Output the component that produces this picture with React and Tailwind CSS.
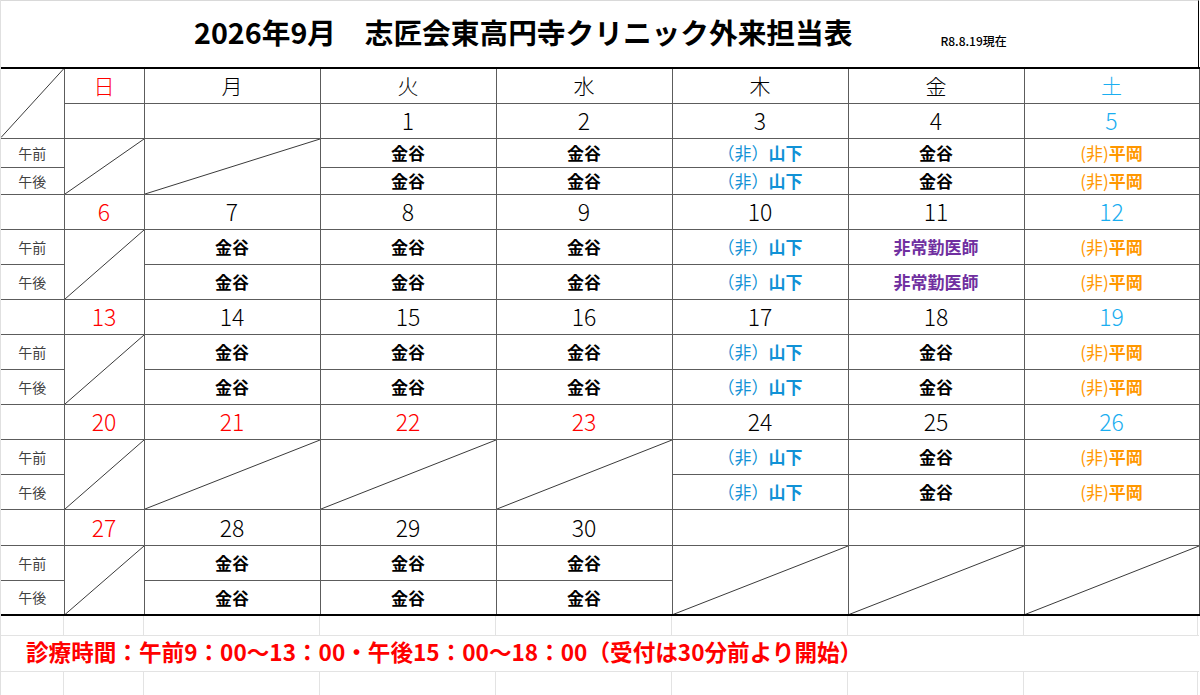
import React from "react";

const B = "border-r border-b border-[#5c5c5c]";
const H = { 27: "h-[27px]", 29: "h-[29px]", 35: "h-[35px]", 36: "h-[36px]" };

function Td({ children, className = "", rowSpan }) {
  return (
    <td rowSpan={rowSpan} className={`${B} p-0 text-center align-middle ${className}`}>
      {children}
    </td>
  );
}

function Diag({ rowSpan = 2 }) {
  return (
    <td rowSpan={rowSpan} className={`${B} relative p-0`}>
      <svg
        className="absolute inset-0 h-full w-full"
        viewBox="0 0 100 100"
        preserveAspectRatio="none"
      >
        <line x1="0" y1="100" x2="100" y2="0" stroke="#3a3a3a" strokeWidth="1" vectorEffect="non-scaling-stroke" />
      </svg>
    </td>
  );
}

function Name({ t }) {
  if (t === "K") return <span className="font-bold text-black">金谷</span>;
  if (t === "Y")
    return (
      <span className="text-[#1192d6]">
        <span>（非）</span>
        <span className="font-bold">山下</span>
      </span>
    );
  if (t === "H")
    return (
      <span className="text-[#ff9700]">
        <span>(非)</span>
        <span className="font-bold">平岡</span>
      </span>
    );
  if (t === "P") return <span className="font-bold text-[#7030a0]">非常勤医師</span>;
  return null;
}

const weeks = [
  { dates: ["", "", "1", "2", "3", "4", "5"], dh: 35, ah: 29, ph: 27, am: ["D", "D", "K", "K", "Y", "K", "H"], pm: ["K", "K", "Y", "K", "H"] },
  { dates: ["6", "7", "8", "9", "10", "11", "12"], dh: 35, ah: 35, ph: 35, am: ["D", "K", "K", "K", "Y", "P", "H"], pm: ["K", "K", "K", "Y", "P", "H"] },
  { dates: ["13", "14", "15", "16", "17", "18", "19"], dh: 35, ah: 35, ph: 35, am: ["D", "K", "K", "K", "Y", "K", "H"], pm: ["K", "K", "K", "Y", "K", "H"] },
  { dates: ["20", "21", "22", "23", "24", "25", "26"], dh: 35, ah: 35, ph: 35, am: ["D", "D", "D", "D", "Y", "K", "H"], pm: ["Y", "K", "H"] },
  { dates: ["27", "28", "29", "30", "", "", ""], dh: 36, ah: 35, ph: 35, am: ["D", "K", "K", "K", "D", "D", "D"], pm: ["K", "K", "K"] },
];

const holidays = ["21", "22", "23"];

function dateColor(i, d) {
  if (i === 0 || holidays.includes(d)) return "text-[#ff0000]";
  if (i === 6) return "text-[#1aaef0]";
  return "text-black";
}

function Week({ w }) {
  return (
    <>
      <tr className={H[w.dh]}>
        <Td />
        {w.dates.map((d, i) => (
          <Td key={i} className={`text-[23px] leading-none font-light ${dateColor(i, d)}`}>
            {d}
          </Td>
        ))}
      </tr>
      <tr className={H[w.ah]}>
        <Td className="text-[14px] leading-none text-[#404040]">午前</Td>
        {w.am.map((t, i) =>
          t === "D" ? (
            <Diag key={i} />
          ) : (
            <Td key={i} className="text-[17px] leading-none">
              <Name t={t} />
            </Td>
          )
        )}
      </tr>
      <tr className={H[w.ph]}>
        <Td className="text-[14px] leading-none text-[#404040]">午後</Td>
        {w.pm.map((t, i) => (
          <Td key={i} className="text-[17px] leading-none">
            <Name t={t} />
          </Td>
        ))}
      </tr>
    </>
  );
}

const days = [
  { t: "日", c: "text-[#ff0000]" },
  { t: "月", c: "text-black" },
  { t: "火", c: "text-black" },
  { t: "水", c: "text-black" },
  { t: "木", c: "text-black" },
  { t: "金", c: "text-black" },
  { t: "土", c: "text-[#1aaef0]" },
];

function GridStrip({ h }) {
  return (
    <div className={`flex ${h} border-b border-[#e3e3e3]`}>
      <div className="w-[63px] border-r border-[#e3e3e3]" />
      <div className="w-[80px] border-r border-[#e3e3e3]" />
      <div className="w-[176px] border-r border-[#e3e3e3]" />
      <div className="w-[176px] border-r border-[#e3e3e3]" />
      <div className="w-[176px] border-r border-[#e3e3e3]" />
      <div className="w-[176px] border-r border-[#e3e3e3]" />
      <div className="w-[176px] border-r border-[#e3e3e3]" />
      <div className="w-[174px] border-r border-[#e3e3e3]" />
    </div>
  );
}

export default function App() {
  return (
    <div className="w-[1200px] h-[695px] overflow-hidden bg-white font-['Noto_Sans_CJK_JP','Noto_Sans',sans-serif] text-black">
      <div className="w-[1199px] border-l border-[#e0e0e0]">
        <div className="flex h-[67px] border-t border-t-[#d9d9d9] border-r border-r-black">
          <div className="pl-[193px] pt-[11px] text-[28.7px] font-bold leading-[40px] whitespace-nowrap">
            2026年9月　志匠会東高円寺クリニック外来担当表
          </div>
          <div className="ml-[88px] pt-[33px] text-[12px] font-medium leading-[14px] whitespace-nowrap">
            R8.8.19現在
          </div>
        </div>
        <table className="w-[1198px] table-fixed border-collapse border-t-2 border-b-2 border-black">
          <colgroup>
            <col className="w-[63px]" />
            <col className="w-[80px]" />
            <col className="w-[176px]" />
            <col className="w-[176px]" />
            <col className="w-[176px]" />
            <col className="w-[176px]" />
            <col className="w-[176px]" />
            <col className="w-[175px]" />
          </colgroup>
          <tbody>
            <tr className="h-[35px]">
              <Diag />
              {days.map((d) => (
                <Td key={d.t} className={`text-[21px] leading-none font-light ${d.c}`}>
                  {d.t}
                </Td>
              ))}
            </tr>
            <tr className="h-[35px]">
              {weeks[0].dates.map((d, i) => (
                <Td key={i} className={`text-[23px] leading-none font-light ${dateColor(i, d)}`}>
                  {d}
                </Td>
              ))}
            </tr>
            <tr className="h-[29px]">
              <Td className="text-[14px] leading-none text-[#404040]">午前</Td>
              {weeks[0].am.map((t, i) =>
                t === "D" ? (
                  <Diag key={i} />
                ) : (
                  <Td key={i} className="text-[17px] leading-none">
                    <Name t={t} />
                  </Td>
                )
              )}
            </tr>
            <tr className="h-[27px]">
              <Td className="text-[14px] leading-none text-[#404040]">午後</Td>
              {weeks[0].pm.map((t, i) => (
                <Td key={i} className="text-[17px] leading-none">
                  <Name t={t} />
                </Td>
              ))}
            </tr>
            {weeks.slice(1).map((w, i) => (
              <Week key={i} w={w} />
            ))}
          </tbody>
        </table>
        <GridStrip h="h-[20px]" />
        <div className="flex h-[36px] items-center border-b border-[#e3e3e3] pl-[25px] pb-[3px] text-[22.6px] font-bold leading-none text-[#ff0000] whitespace-nowrap">
          診療時間：午前9：00～13：00・午後15：00～18：00（受付は30分前より開始）
        </div>
        <GridStrip h="h-[30px]" />
      </div>
    </div>
  );
}
